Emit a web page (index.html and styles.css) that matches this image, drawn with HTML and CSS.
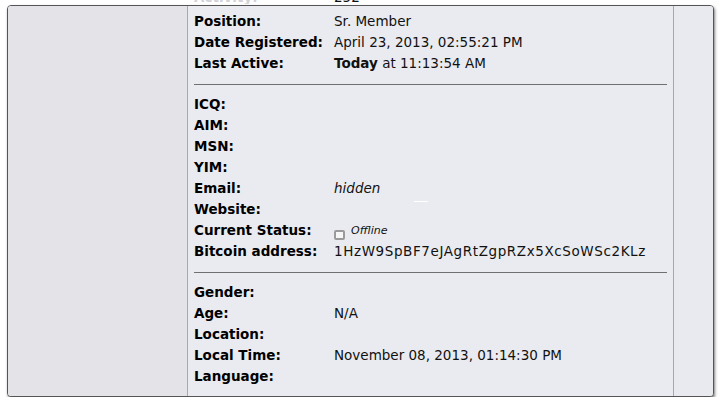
FILE: index.html
```html
<!DOCTYPE html>
<html>
<head>
<meta charset="utf-8">
<link rel="stylesheet" href="styles.css">
</head>
<body>
<div class="peek">
  <div class="row"><span class="lbl">Activity:</span><span class="val">252</span></div>
</div>
<div class="panel">
  <div class="side"></div>
  <div class="main">
    <div class="group">
      <div class="row"><span class="lbl">Position:</span><span class="val">Sr. Member</span></div>
      <div class="row"><span class="lbl">Date Registered:</span><span class="val">April 23, 2013, 02:55:21 PM</span></div>
      <div class="row"><span class="lbl">Last Active:</span><span class="val"><b>Today</b> at 11:13:54 AM</span></div>
    </div>
    <div class="rule"></div>
    <div class="group">
      <div class="row"><span class="lbl">ICQ:</span><span class="val"></span></div>
      <div class="row"><span class="lbl">AIM:</span><span class="val"></span></div>
      <div class="row"><span class="lbl">MSN:</span><span class="val"></span></div>
      <div class="row"><span class="lbl">YIM:</span><span class="val"></span></div>
      <div class="row"><span class="lbl">Email:</span><span class="val"><i>hidden</i></span></div>
      <div class="row"><span class="lbl">Website:</span><span class="val"><span class="glint"></span></span></div>
      <div class="row"><span class="lbl">Current Status:</span><span class="val"><span class="status-box"></span><i class="status-text">Offline</i></span></div>
      <div class="row"><span class="lbl">Bitcoin address:</span><span class="val addr">1HzW9SpBF7eJAgRtZgpRZx5XcSoWSc2KLz</span></div>
    </div>
    <div class="rule"></div>
    <div class="group">
      <div class="row"><span class="lbl">Gender:</span><span class="val"></span></div>
      <div class="row"><span class="lbl">Age:</span><span class="val">N/A</span></div>
      <div class="row"><span class="lbl">Location:</span><span class="val"></span></div>
      <div class="row"><span class="lbl">Local Time:</span><span class="val">November 08, 2013, 01:14:30 PM</span></div>
      <div class="row"><span class="lbl">Language:</span><span class="val"></span></div>
    </div>
    <div class="rule"></div>
  </div>
  <div class="aside"></div>
</div>
</body>
</html>
```
FILE: styles.css
```css
html, body {
  margin: 0;
  padding: 0;
  background: #ffffff;
  font-family: "DejaVu Sans", Verdana, sans-serif;
  font-size: 13.5px;
  color: #000;
}

.peek {
  height: 4px;
  overflow: hidden;
  padding-left: 194px;
}
.peek .row {
  margin-top: -13px;
  color: #d2d2d6;
}

.row {
  display: flex;
  height: 21px;
  line-height: 21px;
  white-space: nowrap;
}
.lbl {
  width: 140px;
  flex: none;
  font-weight: bold;
}
.val {
  flex: 1;
  color: #111;
}
.addr {
  letter-spacing: 0.6px;
}

.panel {
  margin-top: 1px;
  margin-left: 7px;
  width: 707px;
  height: 392px;
  box-sizing: border-box;
  border: 1px solid #555;
  border-radius: 4px;
  box-shadow: 1px 2px 3px rgba(0, 0, 0, 0.5);
  display: flex;
  overflow: hidden;
  background: #eaebf0;
}
.side {
  width: 179px;
  flex: none;
  background: #e4e4e8;
  border-right: 1px solid #a9a9ad;
}
.main {
  flex: 1;
  padding: 5px 6px 0;
  overflow: hidden;
  background: #eaebf0;
}
.aside {
  width: 39px;
  flex: none;
  background: #e9eaef;
  border-left: 1px solid #a9a9ad;
}

.rule {
  height: 1px;
  background: #707070;
  margin: 10px 0 9px;
}

.glint {
  display: inline-block;
  width: 14px;
  height: 1px;
  background: #ffffff;
  margin-left: 80px;
  margin-top: 2px;
  vertical-align: top;
}

.status-box {
  display: inline-block;
  width: 7px;
  height: 6px;
  border: 2px solid #9a9a9a;
  border-radius: 2px;
  background: #f6f6f6;
  vertical-align: -3px;
  margin-right: 6px;
}
.status-text {
  font-size: 11px;
  vertical-align: 3px;
}
```
